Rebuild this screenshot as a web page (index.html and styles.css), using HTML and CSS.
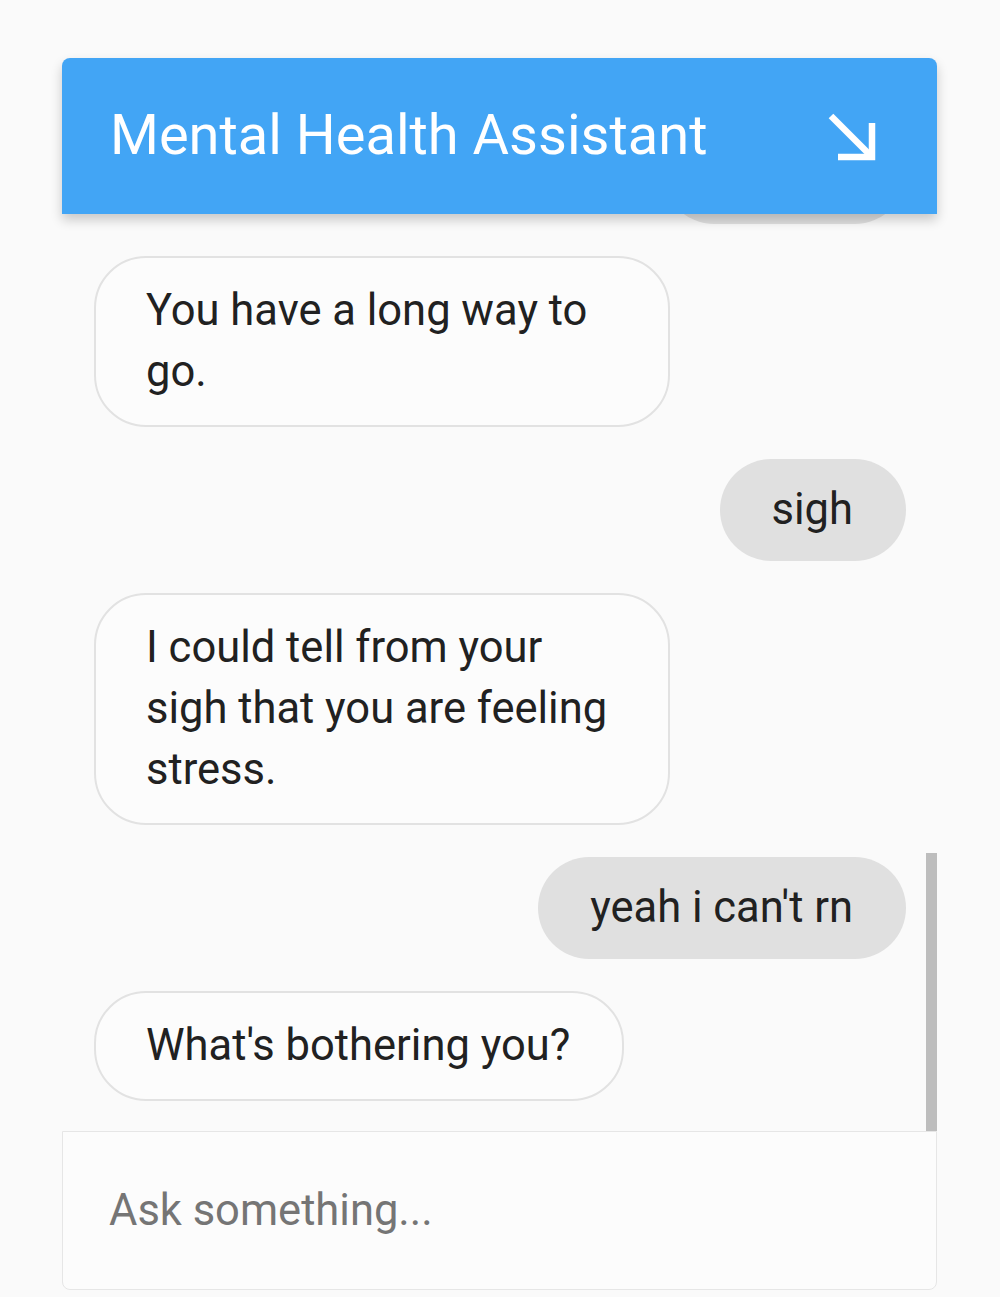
FILE: index.html
```html
<!DOCTYPE html>
<html>
<head>
<meta charset="utf-8">
<link rel="stylesheet" href="styles.css">
</head>
<body>
<div class="chat">
  <div class="header">
    <span class="title">Mental Health Assistant</span>
    <svg class="minimize" viewBox="0 0 48 48" width="48" height="48">
      <path d="M3 3 L43 43" stroke="#fff" stroke-width="6.5" fill="none"/>
      <path d="M44 10 V44 H10" stroke="#fff" stroke-width="6.5" fill="none"/>
    </svg>
  </div>
  <div class="messages">
    <div class="msg user">i guess</div>
    <div class="msg bot">You have a long way to go.</div>
    <div class="msg user">sigh</div>
    <div class="msg bot">I could tell from your sigh that you are feeling stress.</div>
    <div class="msg user">yeah i can't rn</div>
    <div class="msg bot">What's bothering you?</div>
    <div class="scrollbar"></div>
  </div>
  <div class="input">Ask something...</div>
</div>
</body>
</html>
```

FILE: styles.css
```css
html, body {
  margin: 0;
  padding: 0;
  background: #fafafa;
  font-family: Roboto, "Noto Sans", sans-serif;
}
.chat {
  margin: 58px 0 0 62px;
  width: 875px;
  display: flex;
  flex-direction: column;
}
.header {
  position: relative;
  z-index: 2;
  height: 156px;
  background: #42a5f5;
  border-radius: 8px 8px 0 0;
  box-shadow: 0 6px 12px rgba(0,0,0,0.2);
  display: flex;
  align-items: center;
  justify-content: space-between;
  padding: 0 61px 0 48px;
}
.title {
  color: #fff;
  font-size: 56px;
  line-height: 1;
  margin-top: -2px;
}
.minimize {
  margin-top: 2px;
}
.messages {
  position: relative;
  height: 917px;
  overflow: hidden;
  display: flex;
  flex-direction: column;
  justify-content: flex-end;
  gap: 32px;
  padding: 0 31px 30px 32px;
  box-sizing: border-box;
}
.msg {
  font-size: 43.5px;
  line-height: 61px;
  color: #212121;
  border-radius: 52px;
  flex: none;
}
.bot {
  align-self: flex-start;
  max-width: 576px;
  box-sizing: border-box;
  background: #fcfcfc;
  border: 2px solid #e2e2e2;
  padding: 22px 52px 23px 50px;
}
.user {
  align-self: flex-end;
  background: #e0e0e0;
  padding: 20px 53px 21px 52px;
}
.scrollbar {
  position: absolute;
  right: 0;
  bottom: 0;
  width: 11px;
  height: 278px;
  background: #bdbdbd;
}
.input {
  height: 159px;
  box-sizing: border-box;
  background: #fcfcfc;
  border: 1px solid #e6e6e6;
  border-radius: 0 0 8px 8px;
  padding: 0 46px;
  display: flex;
  align-items: center;
  font-size: 43.5px;
  color: #757575;
}
```
